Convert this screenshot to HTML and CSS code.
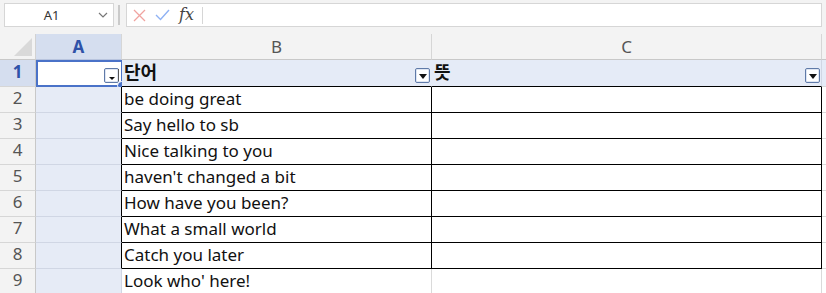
FILE: index.html
```html
<!DOCTYPE html>
<html lang="ko">
<head>
    <meta charset="UTF-8">
    <meta name="viewport" content="width=device-width, initial-scale=1.0">
    <title>단어장</title>
    <link rel="stylesheet" href="styles.css">
</head>
<body>
    <div class="formula-bar">
        <div class="name-box">
            <span class="name-text">A1</span>
            <svg class="chevron" width="10" height="6" viewBox="0 0 10 6"><path d="M1 1 L5 5 L9 1" fill="none" stroke="#777" stroke-width="1.2"/></svg>
        </div>
        <div class="grip"></div>
        <div class="formula-box">
            <svg class="fb-icon" width="13" height="13" viewBox="0 0 13 13"><path d="M1 1 L12 12 M12 1 L1 12" stroke="#f0a4a0" stroke-width="1.3"/></svg>
            <svg class="fb-icon" width="15" height="12" viewBox="0 0 15 12"><path d="M1 6 L5.5 10.5 L14 1" fill="none" stroke="#8fb2f4" stroke-width="1.4"/></svg>
            <span class="fx">fx</span>
            <span class="fb-divider"></span>
        </div>
    </div>

    <div class="sheet">
        <!-- column headers -->
        <div class="corner"><span class="corner-tri"></span></div>
        <div class="col-head selected">A</div>
        <div class="col-head">B</div>
        <div class="col-head">C</div>
        <div class="col-head last"></div>

        <!-- row 1 : table header -->
        <div class="row-head selected">1</div>
        <div class="cell row-one col-a active">
            <span class="filter-btn"><span class="tri"></span></span>
            <span class="sort-mark"></span>
            <span class="select-box"></span>
        </div>
        <div class="cell row-one head-cell">단어<span class="filter-btn"><span class="tri"></span></span></div>
        <div class="cell row-one head-cell edge">뜻<span class="filter-btn"><span class="tri"></span></span></div>
        <div class="cell row-one last"></div>

        <div class="row-head">2</div>
        <div class="cell col-a tb-left"></div>
        <div class="cell tb">be doing great</div>
        <div class="cell tb"></div>
        <div class="cell last"></div>

        <div class="row-head">3</div>
        <div class="cell col-a tb-left"></div>
        <div class="cell tb">Say hello to sb</div>
        <div class="cell tb"></div>
        <div class="cell last"></div>

        <div class="row-head">4</div>
        <div class="cell col-a tb-left"></div>
        <div class="cell tb">Nice talking to you</div>
        <div class="cell tb"></div>
        <div class="cell last"></div>

        <div class="row-head">5</div>
        <div class="cell col-a tb-left"></div>
        <div class="cell tb">haven't changed a bit</div>
        <div class="cell tb"></div>
        <div class="cell last"></div>

        <div class="row-head">6</div>
        <div class="cell col-a tb-left"></div>
        <div class="cell tb">How have you been?</div>
        <div class="cell tb"></div>
        <div class="cell last"></div>

        <div class="row-head">7</div>
        <div class="cell col-a tb-left"></div>
        <div class="cell tb">What a small world</div>
        <div class="cell tb"></div>
        <div class="cell last"></div>

        <div class="row-head">8</div>
        <div class="cell col-a tb-left"></div>
        <div class="cell tb">Catch you later</div>
        <div class="cell tb"></div>
        <div class="cell last"></div>

        <div class="row-head">9</div>
        <div class="cell col-a"></div>
        <div class="cell">Look who' here!</div>
        <div class="cell"></div>
        <div class="cell last"></div>
    </div>
</body>
</html>
```

FILE: styles.css
```css
body {
    margin: 0;
    padding: 0;
    background-color: #f3f3f3;
    font-family: "Noto Sans", "Noto Sans CJK KR", sans-serif;
    overflow: hidden;
}

.formula-bar {
    display: flex;
    align-items: flex-start;
    height: 34px;
    padding: 3px 0 0 4px;
    box-sizing: border-box;
}

.name-box {
    width: 110px;
    height: 24px;
    box-sizing: border-box;
    border: 1px solid #d6d6d6;
    background-color: #fff;
    display: flex;
    align-items: center;
}

.name-text {
    flex: 1;
    text-align: center;
    font-size: 13px;
    color: #333;
}

.chevron {
    margin-right: 5px;
}

.grip {
    width: 2px;
    height: 20px;
    margin: 2px 6px 0 4px;
    background-image: radial-gradient(circle, #999 0.6px, transparent 0.8px);
    background-size: 2px 2px;
}

.formula-box {
    flex: 1;
    height: 24px;
    margin-right: 4px;
    box-sizing: border-box;
    border: 1px solid #d6d6d6;
    background-color: #fff;
    display: flex;
    align-items: center;
    padding-left: 6px;
    gap: 9px;
}

.fx {
    font-family: "DejaVu Serif", "Liberation Serif", serif;
    font-style: italic;
    font-size: 16px;
    color: #444;
    margin-top: -2px;
}

.fb-divider {
    width: 1px;
    height: 17px;
    background-color: #d6d6d6;
    margin-left: -1px;
}

/* grid */
.sheet {
    display: grid;
    grid-template-columns: 36px 86px 310px 390px 1fr;
    grid-template-rows: 26px 27px repeat(8, 26px);
    font-size: 17px;
}

.corner {
    background-color: #f3f3f3;
    border-right: 1px solid #d2d2d2;
    border-bottom: 1px solid #c8c8c8;
    position: relative;
}

.corner-tri {
    position: absolute;
    right: 3px;
    bottom: 3px;
    width: 0;
    height: 0;
    border-left: 18px solid transparent;
    border-bottom: 18px solid #d9d9d9;
}

.col-head {
    background-color: #f3f3f3;
    border-right: 1px solid #d6d6d6;
    border-bottom: 1px solid #c8c8c8;
    display: flex;
    align-items: center;
    justify-content: center;
    color: #555;
    font-size: 17px;
    box-sizing: border-box;
}

.col-head.selected {
    background-color: #d5deef;
    color: #2f52a8;
    font-weight: bold;
    border-bottom: 1px solid #b8c4de;
}

.col-head.last {
    border-right: none;
}

.row-head {
    background-color: #f3f3f3;
    border-right: 1px solid #c8c8c8;
    border-bottom: 1px solid #d6d6d6;
    display: flex;
    align-items: flex-end;
    justify-content: center;
    color: #555;
    font-size: 17px;
    line-height: 24px;
    padding-bottom: 2px;
    box-sizing: border-box;
}

.row-head.selected {
    background-color: #d5deef;
    color: #2f52a8;
    font-weight: bold;
}

.cell {
    background-color: #fff;
    border-right: 1px solid #dadada;
    border-bottom: 1px solid #dadada;
    display: flex;
    align-items: flex-end;
    padding: 0 0 1px 2px;
    color: #111;
    line-height: 24px;
    white-space: nowrap;
    position: relative;
    box-sizing: border-box;
}

.col-a {
    background-color: #e6ebf6;
    border-right-color: #d0d6e4;
    border-bottom-color: #d0d6e4;
}

.row-one {
    background-color: #e5ebf7;
    border-right-color: transparent;
}

.cell.last {
    border-right: none;
}

.head-cell {
    font-family: "Noto Sans CJK KR", sans-serif;
    font-weight: bold;
    font-size: 18px;
    line-height: 22px;
    align-items: flex-start;
    padding-top: 0;
    border-bottom: 1px solid #000;
}

.head-cell.edge {
    border-right: 1px solid #d0d6e4;
}

.tb {
    border-right: 1px solid #000;
    border-bottom: 1px solid #000;
}

.tb-left {
    border-right: 1px solid #000;
}

/* filter dropdown */
.filter-btn {
    position: absolute;
    right: 1px;
    bottom: 3px;
    width: 15px;
    height: 15px;
    box-sizing: border-box;
    border: 1px solid #5f7aa8;
    border-radius: 2px;
    background-color: #fff;
    box-shadow: inset 0 0 0 1px #dfe6f3;
}

.tri {
    position: absolute;
    left: 3px;
    top: 5px;
    width: 0;
    height: 0;
    border-left: 4px solid transparent;
    border-right: 4px solid transparent;
    border-top: 5px solid #111;
}

.active {
    background-color: #fff;
    border-right: none;
}

.active .filter-btn {
    right: 3px;
    bottom: 3px;
}

.active .tri {
    left: 4px;
    top: 8px;
    border-left-width: 3px;
    border-right-width: 3px;
    border-top-width: 3px;
}

.sort-mark {
    position: absolute;
    right: 3px;
    bottom: 5px;
    width: 1px;
    height: 12px;
    background-color: #555;
}

.select-box {
    position: absolute;
    left: 0;
    top: 0;
    right: -1px;
    bottom: -1px;
    border: 2px solid #4a72c8;
    pointer-events: none;
}

.select-box::after {
    content: "";
    position: absolute;
    right: -5px;
    bottom: -5px;
    width: 7px;
    height: 7px;
    border-radius: 50%;
    background-color: #4a72c8;
    border: 1px solid #fff;
}
```
